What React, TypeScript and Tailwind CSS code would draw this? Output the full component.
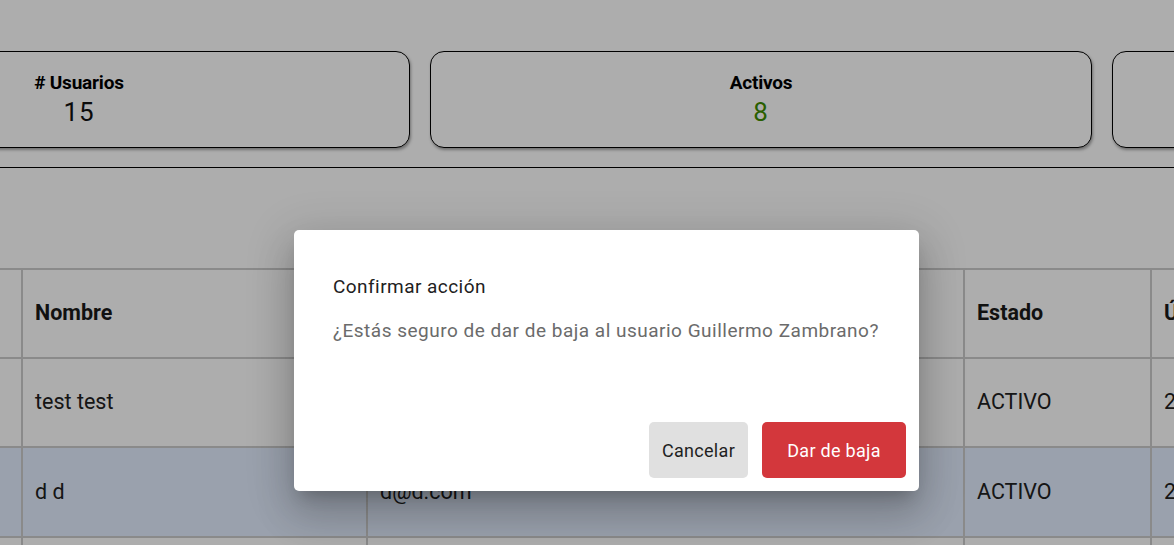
import React from 'react';

const font = { fontFamily: 'Roboto, "Liberation Sans", sans-serif' };

type Stat = { label: string; value: string; tone: string };

const stats: Stat[] = [
  { label: '# Usuarios', value: '15', tone: 'text-[#111111]' },
  { label: 'Activos', value: '8', tone: 'text-[#3d8c00]' },
  { label: 'Inactivos', value: '7', tone: 'text-[#c62828]' },
];

const rows = [
  { id: '1', name: 'test test', email: 'test@test.com', status: 'ACTIVO', last: '2025-03-11', selected: false },
  { id: '2', name: 'd d', email: 'd@d.com', status: 'ACTIVO', last: '2025-03-10', selected: true },
  { id: '3', name: 'Guillermo Zambrano', email: 'gzambrano@mail.com', status: 'ACTIVO', last: '2025-03-09', selected: false },
];

const StatCard: React.FC<{ stat: Stat }> = ({ stat }) => (
  <div className="w-[662px] h-[97px] shrink-0 rounded-[14px] border border-black bg-white shadow-[1px_2px_3px_rgba(0,0,0,0.35)] flex flex-col items-center pt-[19px]">
    <span className="text-[19px] leading-[24px] font-bold tracking-[-0.2px] text-black">{stat.label}</span>
    <span className={`text-[26px] leading-[30px] mt-[2px] tracking-[1px] ${stat.tone}`}>{stat.value}</span>
  </div>
);

const Cell: React.FC<{ children?: React.ReactNode; head?: boolean; selected?: boolean }> = ({ children, head, selected }) => (
  <div
    className={`flex items-center px-3 text-[21.5px] whitespace-nowrap overflow-hidden ${
      head ? 'font-bold text-[#1a1a1a]' : 'text-[#212121]'
    } ${selected ? 'bg-[#e3eeff]' : 'bg-white'}`}
  >
    {children}
  </div>
);

export default function App() {
  return (
    <div className="relative w-[1174px] h-[545px] overflow-hidden bg-white" style={font}>
      {/* Page content */}
      <div className="pt-[51px]">
        <div className="flex gap-5 ml-[-252px]">
          {stats.map((s) => (
            <StatCard key={s.label} stat={s} />
          ))}
        </div>

        <div className="mt-[19px] border-t border-black" />

        <div className="mt-[100px] ml-[-59px] w-[1400px] grid grid-cols-[80px_343px_595px_185px_200px] grid-rows-[87px_87px_88px_87px] gap-[2px] bg-[#cccccc] pt-[2px]">
          <Cell head>ID</Cell>
          <Cell head>Nombre</Cell>
          <Cell head>Correo</Cell>
          <Cell head>Estado</Cell>
          <Cell head>Último acceso</Cell>
          {rows.map((r) => (
            <React.Fragment key={r.id}>
              <Cell selected={r.selected}>{r.id}</Cell>
              <Cell selected={r.selected}>{r.name}</Cell>
              <Cell selected={r.selected}>{r.email}</Cell>
              <Cell selected={r.selected}>{r.status}</Cell>
              <Cell selected={r.selected}>{r.last}</Cell>
            </React.Fragment>
          ))}
        </div>
      </div>

      {/* Backdrop */}
      <div className="absolute inset-0 bg-black/[0.32]" />

      {/* Confirm dialog */}
      <div className="absolute left-[294px] top-[230px] w-[625px] h-[261px] rounded-[5px] bg-white flex flex-col shadow-[0_11px_15px_-7px_rgba(0,0,0,0.2),0_24px_38px_3px_rgba(0,0,0,0.14),0_9px_46px_8px_rgba(0,0,0,0.12)]">
        <div className="px-[39px] pt-[45px]">
          <h2 className="text-[19px] leading-[24px] tracking-[0.45px] text-[#212121]">Confirmar acción</h2>
          <p className="mt-[20px] text-[19px] leading-[24px] tracking-[0.5px] text-[#6b6b6b]">
            ¿Estás seguro de dar de baja al usuario Guillermo Zambrano?
          </p>
        </div>
        <div className="mt-auto flex justify-end gap-[14px] pr-[13px] pb-[13px]">
          <button className="w-[99px] h-[56px] rounded-[5px] bg-[#e0e0e0] text-[18px] tracking-[0.3px] text-[#1f1f1f]">
            Cancelar
          </button>
          <button className="w-[144px] h-[56px] rounded-[5px] bg-[#d3373c] text-[18px] tracking-[0.3px] text-white">
            Dar de baja
          </button>
        </div>
      </div>
    </div>
  );
}
